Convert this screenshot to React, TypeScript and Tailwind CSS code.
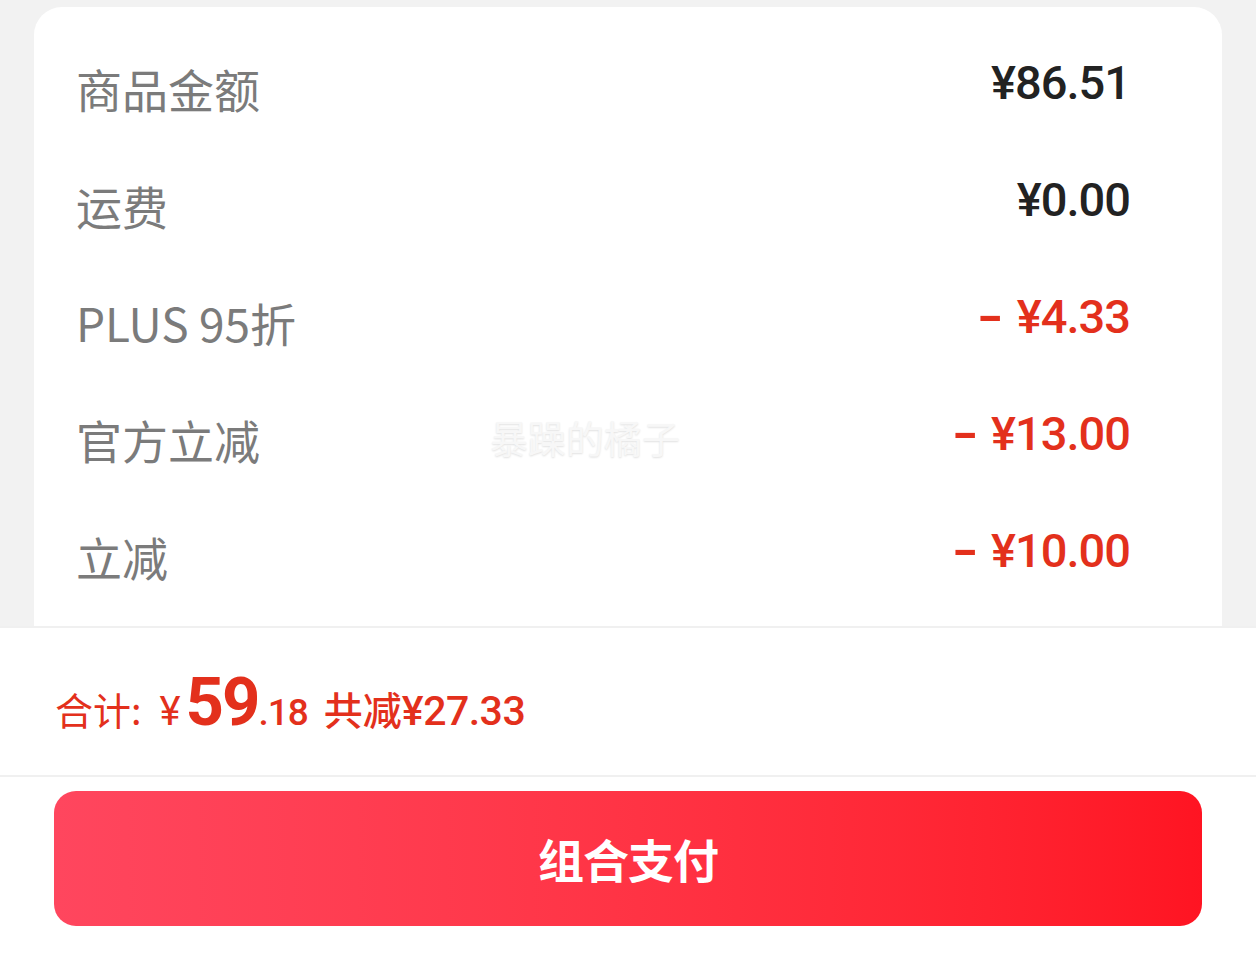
import React from 'react';

const rows = [
  { label: '商品金额', value: '¥86.51', minus: false },
  { label: '运费', value: '¥0.00', minus: false },
  { label: 'PLUS 95折', value: '¥4.33', minus: true },
  { label: '官方立减', value: '¥13.00', minus: true },
  { label: '立减', value: '¥10.00', minus: true },
];

const cjk = { fontFamily: '"Noto Sans CJK SC", "Noto Sans", sans-serif' };
const num = { fontFamily: 'Roboto, "Noto Sans CJK SC", sans-serif' };

export default function App() {
  return (
    <div className="relative w-[1256px] h-[968px] bg-[#f2f2f2] flex flex-col overflow-hidden" style={cjk}>
      <div className="h-[626px] shrink-0 px-[34px] pt-[7px] overflow-hidden">
        <div className="bg-white rounded-t-[28px] h-[700px] pl-[42px] pr-[92px] pt-[22px] flex flex-col">
          {rows.map((r, i) => (
            <div key={i} className="h-[117px] flex items-center justify-between">
              <span className="text-[46px] leading-none text-[#7b7b7b]">{r.label}</span>
              <span
                className={`flex items-center text-[47px] leading-none font-medium tracking-[-1px] -mt-[10px] ${r.minus ? 'text-[#e3301c]' : 'text-[#222222]'}`}
                style={num}
              >
                {r.minus && <span className="font-bold mr-[18px] scale-x-150">-</span>}
                {r.value}
              </span>
            </div>
          ))}
        </div>
      </div>

      <div className="h-[151px] shrink-0 bg-white border-t-2 border-b-2 border-[#f0f0f0] flex items-center pl-[55px] pt-[8px]">
        <div className="flex items-baseline text-[#e3301c]">
          <span className="text-[38px]">合计:</span>
          <span className="text-[40px] ml-[18px]" style={num}>¥</span>
          <span className="text-[67px] font-bold leading-none tracking-[-2px] ml-[5px]" style={num}>59</span>
          <span className="text-[37px] font-medium tracking-[-1px]" style={num}>.18</span>
          <span className="text-[39px] ml-[16px] font-medium">共减</span>
          <span className="text-[41px] font-medium tracking-[-0.5px]" style={num}>¥27.33</span>
        </div>
      </div>

      <div className="flex-1 bg-white px-[54px] pt-[14px]">
        <div className="h-[135px] rounded-[22px] bg-gradient-to-r from-[#ff465e] to-[#ff1422] flex items-center justify-center">
          <span className="text-white text-[46px] font-bold tracking-[-1px]">组合支付</span>
        </div>
      </div>

      <div className="absolute left-[490px] top-[408px] text-[38px] text-[#f7f7f7] [text-shadow:0_1px_2px_rgba(0,0,0,0.12)] pointer-events-none">
        暴躁的橘子
      </div>
    </div>
  );
}
